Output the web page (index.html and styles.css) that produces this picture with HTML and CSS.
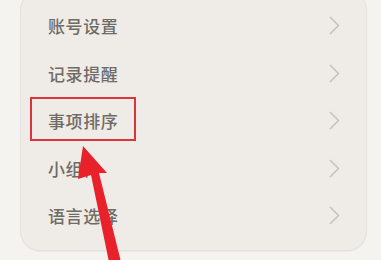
FILE: index.html
```html
<!DOCTYPE html>
<html lang="zh">
<head>
<meta charset="utf-8">
<link rel="stylesheet" href="styles.css">
</head>
<body>
<div class="page">
  <div class="card">
    <div class="row"><span class="label">账号设置</span><svg class="chev" viewBox="0 0 11 19"><path d="M1 1 L9.5 9.5 L1 18"/></svg></div>
    <div class="row"><span class="label">记录提醒</span><svg class="chev" viewBox="0 0 11 19"><path d="M1 1 L9.5 9.5 L1 18"/></svg></div>
    <div class="row"><span class="label">事项排序</span><svg class="chev" viewBox="0 0 11 19"><path d="M1 1 L9.5 9.5 L1 18"/></svg></div>
    <div class="row"><span class="label">小组件</span><svg class="chev" viewBox="0 0 11 19"><path d="M1 1 L9.5 9.5 L1 18"/></svg></div>
    <div class="row"><span class="label">语言选择</span><svg class="chev" viewBox="0 0 11 19"><path d="M1 1 L9.5 9.5 L1 18"/></svg></div>
  </div>
  <div class="highlight"></div>
  <svg class="arrow" viewBox="0 0 381 260"><polygon points="83,146 107,173 99,173 121,262 109,262 91,175 78,179"/></svg>
</div>
</body>
</html>
```
FILE: styles.css
```css
html, body {
  margin: 0;
  padding: 0;
  background: #f4f3f0;
}
.page {
  position: relative;
  width: 381px;
  height: 260px;
  overflow: hidden;
}
.card {
  margin: -10px 0 0 20px;
  width: 345px;
  padding: 11px 0 10px;
  background: #efece7;
  border: 1px solid #e4e1dc;
  border-radius: 20px;
  box-shadow: 0 1px 1px rgba(0,0,0,0.04);
}
.row {
  height: 47.5px;
  display: flex;
  align-items: center;
  justify-content: space-between;
  padding: 0 26px 0 27px;
}
.label {
  font-family: "Noto Sans CJK SC", "Noto Sans", sans-serif;
  font-size: 17px;
  font-weight: 500;
  letter-spacing: 0.6px;
  color: #6f6b66;
}
.chev {
  width: 11px;
  height: 19px;
  fill: none;
  stroke: #c2beb8;
  stroke-width: 1.4;
}
.highlight {
  position: absolute;
  left: 30px;
  top: 97px;
  width: 102px;
  height: 40px;
  border: 2px solid #d9363c;
}
.arrow {
  position: absolute;
  left: 0;
  top: 0;
  width: 381px;
  height: 260px;
  fill: #e8212b;
}
```
